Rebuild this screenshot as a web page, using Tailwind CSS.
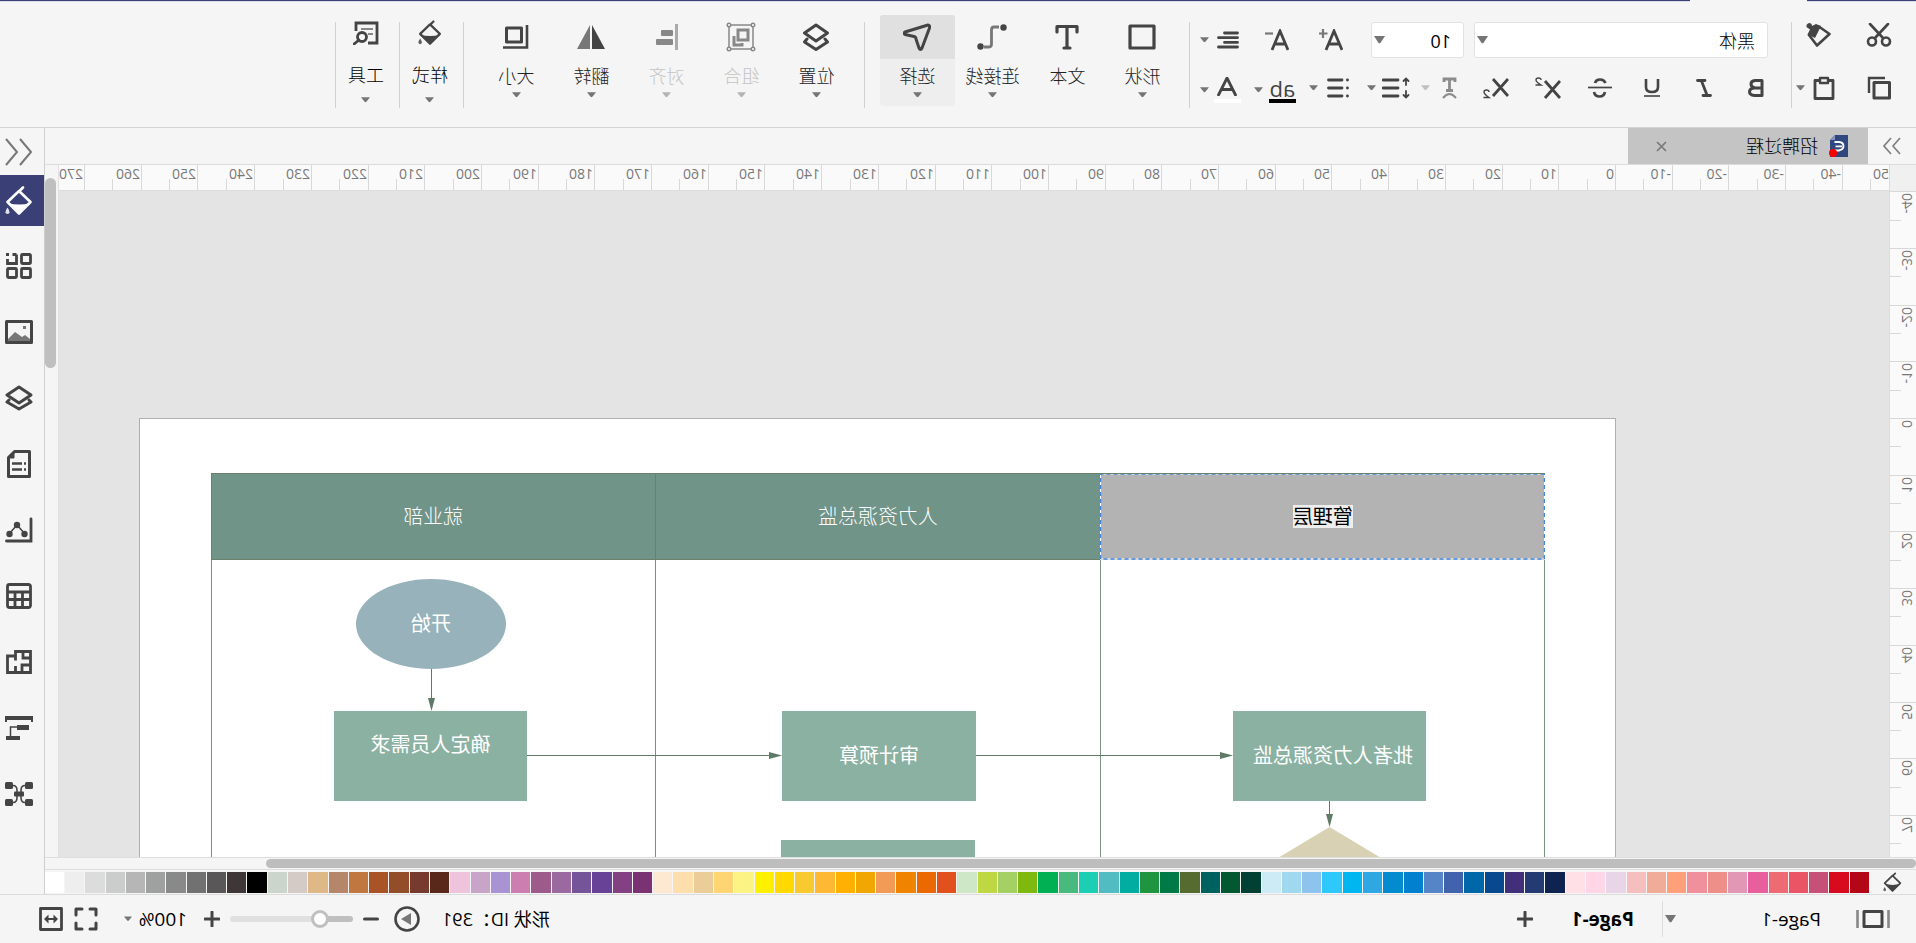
<!DOCTYPE html>
<html lang="zh-CN">
<head>
<meta charset="utf-8">
<title>招聘过程</title>
<script src="https://cdn.jsdelivr.net/npm/@tailwindcss/browser@4"></script>
</head>
<body class="bg-[#f5f5f5] overflow-hidden">
<svg class="hidden" xmlns="http://www.w3.org/2000/svg">
  <symbol id="caret" viewBox="0 0 10 6"><path d="M0 0h10L6 5q-1 1-2 0z" fill="#757575"/></symbol>
  <symbol id="bucket" viewBox="0 0 28 30"><path d="M10 1.500l4 4M14 5l11.500 11L14 27.500 2.500 16z" fill="none" stroke="currentColor" stroke-width="2.600" stroke-linejoin="round" stroke-linecap="round"/><path d="M2.500 17q11 3 23 0L14 28z" fill="currentColor"/><path d="M25.500 21.500q4 6 0 6.500-4-.5 0-6.500z" fill="currentColor" opacity=".85"/></symbol>
  <symbol id="layers" viewBox="0 0 28 26"><path d="M14 2l12 8-12 8L2 10zM4 15l-2 2 12 7 12-7-2-2" fill="none" stroke="currentColor" stroke-width="3" stroke-linejoin="round" stroke-linecap="round"/></symbol>
  <symbol id="plus" viewBox="0 0 16 16"><path d="M8 1v14M1 8h14" stroke="#444" stroke-width="3" stroke-linecap="round"/></symbol>
</svg>

<div class="-scale-x-100 h-screen flex flex-col overflow-hidden bg-[#f5f5f5] text-[#222] font-['Open_Sans','Noto_Sans_CJK_SC',sans-serif] text-[18px] leading-6">

  <!-- title strip -->
  <div class="flex h-[2px] shrink-0"><i class="w-[109px] bg-[#3a4075] border-b border-[#dcdcea]"></i><i class="w-[117px]"></i><i class="flex-1 bg-[#3a4075] border-b border-[#dcdcea]"></i></div>

  <!-- ribbon -->
  <header class="flex h-[126px] shrink-0 border-b border-[#d4d4d4] text-[#444]">
    <section class="w-[124px] pt-[17px] pl-6 flex flex-col" aria-label="剪贴板">
      <div class="flex gap-[34px] h-[36px] items-start pt-1">
        <button aria-label="剪切"><svg class="w-[26px] h-6" viewBox="0 0 26 24" fill="none" stroke="#444" stroke-width="2.6" stroke-linecap="round"><path d="M4 1l13 14M22 1L9 15"/><circle cx="6" cy="18.500" r="4"/><circle cx="20" cy="18.500" r="4"/></svg></button>
        <button aria-label="格式刷"><svg class="w-[26px] h-6" viewBox="0 0 26 24"><path d="M12.500 4L2.500 11 15 22.500 23 12z" fill="none" stroke="#444" stroke-width="2.600" stroke-linejoin="round"/><path d="M11 3l5-2 4 2q0-3 3-3 3 1 2.500 4L22 6.500l2.500 5L17 15z" fill="#444"/></svg></button>
      </div>
      <div class="flex h-[36px] mt-[15px] items-center">
        <button aria-label="复制"><svg class="w-[26px] h-6" viewBox="0 0 26 24" fill="none" stroke="#444" stroke-width="3"><path d="M7 2h16v15" stroke-width="2.400"/><path d="M2.500 6.500h15.500v15.500H2.500z" stroke-linejoin="round"/></svg></button>
        <button aria-label="粘贴" class="ml-[29px] flex items-center gap-[6px]"><svg class="w-[26px] h-6" viewBox="0 0 26 24" fill="none" stroke="#444" stroke-width="2.800" stroke-linejoin="round"><path d="M8 4.500H4v18h18v-18h-4"/><path d="M9 2h8v5H9z" stroke-width="2.400"/></svg><svg class="w-[9px] h-[6px]"><use href="#caret"/></svg></button>
      </div>
    </section>
    <i class="w-px h-[86px] mt-5 bg-[#d0d0d0]"></i>
    <section class="w-[601px] pt-5" aria-label="字体">
      <div class="flex h-[36px] items-center pl-[23px]">
        <label class="relative w-[294px]"><select aria-label="字体" class="appearance-none w-full h-[36px] pt-px pl-3 bg-white border border-[#e2e2e2] rounded-[3px] text-black font-light"><option>黑体</option></select><svg class="absolute right-[3px] top-[14px] w-[11px] h-2" viewBox="0 0 10 6" preserveAspectRatio="none"><use href="#caret"/></svg></label>
        <label class="relative w-[93px] ml-[10px]"><select aria-label="字号" class="appearance-none w-full h-[36px] pt-px pl-3 bg-white border border-[#e2e2e2] rounded-[3px] text-black"><option>10</option></select><svg class="absolute right-[3px] top-[14px] w-[11px] h-2" viewBox="0 0 10 6" preserveAspectRatio="none"><use href="#caret"/></svg></label>
        <button aria-label="增大字号" class="ml-[28px]"><svg class="w-6 h-[22px]" viewBox="0 0 24 22" fill="none" stroke="#444" stroke-width="2.800"><path d="M1 21L9 2l8 19M4 15h10"/><path d="M20 0v9M15.500 4.500h9" stroke="#777" stroke-width="2.200"/></svg></button>
        <button aria-label="减小字号" class="ml-[30px]"><svg class="w-6 h-[22px]" viewBox="0 0 24 22" fill="none" stroke="#444" stroke-width="2.800"><path d="M1 21L9 2l8 19M4 15h10"/><path d="M16 4.500h8" stroke="#777" stroke-width="2.200"/></svg></button>
        <button aria-label="对齐方式" class="ml-[26px] flex items-center gap-2"><svg class="w-[22px] h-[18px]" viewBox="0 0 22 18" fill="none" stroke="#444" stroke-width="2.800" stroke-linecap="round"><path d="M1.500 2h13M1.500 6.700h19M1.500 11.400h13M1.500 16h19"/></svg><svg class="w-[9px] h-[6px]"><use href="#caret"/></svg></button>
      </div>
      <div class="flex h-[36px] mt-3 items-center pl-[9px]">
        <button aria-label="加粗" class="w-[52px] flex justify-center"><svg class="w-4 h-[18px]" viewBox="0 0 16 18" fill="none" stroke="#444" stroke-width="3"><path d="M2 1.500h7q4 .5 4 3.500t-4 4H2zM2 9h7.500q5 .5 5 3.700T9.500 16.500H2z" stroke-linejoin="round"/></svg></button>
        <button aria-label="斜体" class="w-[52px] flex justify-center"><svg class="w-4 h-[18px]" viewBox="0 0 16 18" fill="none" stroke="#444" stroke-width="2.800" stroke-linecap="round"><path d="M7 1.500h7.500M1.500 16.500H9M10.500 2L5 16"/></svg></button>
        <button aria-label="下划线" class="w-[52px] flex justify-center"><svg class="w-4 h-[18px]" viewBox="0 0 16 18" fill="none" stroke="#444" stroke-width="2.600"><path d="M2 0v8q0 5 6 5t6-5V0"/><path d="M0 17h16" stroke-width="1.600"/></svg></button>
        <button aria-label="删除线" class="w-[52px] flex justify-center"><svg class="w-6 h-5" viewBox="0 0 24 20" fill="none" stroke="#444" stroke-width="2.700"><path d="M17 5q-1-3.500-5-3.500T6.500 5M7 14q1 4.500 5.500 4.500T18 14"/><path d="M0 9.500h24" stroke-width="1.700"/></svg></button>
        <button aria-label="上标" class="w-[52px] flex justify-center"><svg class="w-[26px] h-[22px]" viewBox="0 0 26 22" fill="none" stroke="#444" stroke-width="2.800"><path d="M1 4l15 17M16 4L1 21"/><path d="M20 3q0-2 2.500-2T25 3t-5 5h5.500" stroke-width="1.400"/></svg></button>
        <button aria-label="下标" class="w-[52px] flex justify-center"><svg class="w-[26px] h-[22px]" viewBox="0 0 26 22" fill="none" stroke="#444" stroke-width="2.800"><path d="M1 2l15 17M16 2L1 19"/><path d="M20 15q0-2 2.500-2T25 15t-5 5.500h5.500" stroke-width="1.400"/></svg></button>
        <button aria-label="文字方向" disabled class="w-[39px] ml-[10px] flex items-center justify-between"><svg class="w-5 h-[22px]" viewBox="0 0 20 22" fill="none" stroke="#8c8c8c" stroke-width="2.800"><path d="M5 5V2h11v3M10.500 2v11M7 13.500h7"/><path d="M4 21q6.500-8 13 0" stroke-width="2"/></svg><svg class="w-[9px] h-[6px] opacity-40"><use href="#caret"/></svg></button>
        <button aria-label="行距" class="w-[43px] ml-[11px] flex items-center justify-between"><svg class="w-7 h-[22px]" viewBox="0 0 28 22" fill="none" stroke="#444" stroke-width="2.800" stroke-linecap="round"><path d="M12 3h15M12 11h15M12 19h15"/><path d="M4 2v6M1.500 4L4 1.500 6.500 4M4 14v6M1.500 18L4 20.500 6.500 18" stroke-width="1.800"/></svg><svg class="w-[9px] h-[6px]"><use href="#caret"/></svg></button>
        <button aria-label="项目符号" class="w-[40px] ml-[18px] flex items-center justify-between"><svg class="w-[22px] h-[20px]" viewBox="0 0 22 20" fill="none" stroke="#444" stroke-width="2.800" stroke-linecap="round"><path d="M7 2h13.500M7 10h13.500M7 18h13.500"/><path d="M1.500 2h.1M1.500 10h.1M1.500 18h.1"/></svg><svg class="w-[9px] h-[6px]"><use href="#caret"/></svg></button>
        <button class="w-[42px] ml-[13px] mt-1 flex items-center justify-between"><span class="w-[27px] text-center text-[22px] leading-[22px] border-b-4 border-black font-medium">ab</span><svg class="w-[9px] h-[6px]"><use href="#caret"/></svg></button>
        <button aria-label="字体颜色" class="w-[41px] ml-[13px] mt-1 flex items-center justify-between"><span class="w-[27px] pb-[3px] flex justify-center border-b-4 border-white"><svg class="w-5 h-[19px]" viewBox="0 0 20 19" fill="none" stroke="#444" stroke-width="2.800"><path d="M1 19L10 1l9 18M4 12.500h12"/></svg></span><svg class="w-[9px] h-[6px]"><use href="#caret"/></svg></button>
      </div>
    </section>
    <i class="w-px h-[86px] mt-5 bg-[#d0d0d0]"></i>
    <section class="flex pt-[13px] pl-[9px] pr-[15px] text-[#222] font-light" aria-label="绘图">
      <button class="w-[75px] h-[91px] flex flex-col items-center"><span class="h-11 flex items-center"><svg class="w-7 h-[26px]" viewBox="0 0 28 26"><path d="M2 2h24v22H2z" fill="none" stroke="#444" stroke-width="3.200" stroke-linejoin="round"/></svg></span><span class="mt-[5px]">形状</span><svg class="w-[9px] h-[6px] mt-[4px]"><use href="#caret"/></svg></button>
      <button class="w-[75px] h-[91px] flex flex-col items-center"><span class="h-11 flex items-center"><svg class="w-6 h-[26px]" viewBox="0 0 24 26" fill="none" stroke="#444" stroke-width="3.200" stroke-linecap="round" stroke-linejoin="round"><path d="M2 8V2.500h20V8M12 3v20M9 24h6"/></svg></span><span class="mt-[5px]">文本</span></button>
      <button class="w-[75px] h-[91px] flex flex-col items-center"><span class="h-11 flex items-center"><svg class="w-[30px] h-[26px]" viewBox="0 0 30 26"><path d="M8 3h5q2.500 0 2.500 3v14q0 3 2.500 3h5" fill="none" stroke="#777" stroke-width="2.800"/><circle cx="3.500" cy="3.500" r="3.200" fill="#444"/><circle cx="26.500" cy="22.500" r="3.200" fill="#444"/></svg></span><span class="mt-[5px]">连接线</span><svg class="w-[9px] h-[6px] mt-[4px]"><use href="#caret"/></svg></button>
      <button class="w-[75px] h-[91px] flex flex-col items-center rounded-[3px] bg-[#eee] overflow-hidden"><span class="h-11 w-full flex items-center justify-center bg-[#e0e0e0]"><svg class="w-7 h-7" viewBox="0 0 28 28"><path d="M3 2q-2 0-1.500 3L9 25q1.500 3 3 0l3-9q0-2 2-2.500l9-2q2-1 0-2.500z" fill="none" stroke="#444" stroke-width="3" stroke-linejoin="round"/></svg></span><span class="mt-[5px]">选择</span><svg class="w-[9px] h-[6px] mt-[4px]"><use href="#caret"/></svg></button>
    </section>
    <i class="w-px h-[86px] mt-5 bg-[#d0d0d0]"></i>
    <section class="flex pt-[13px] pl-[10px] pr-[15px] text-[#222] font-light" aria-label="排列">
      <button class="w-[75px] h-[91px] flex flex-col items-center"><span class="h-11 flex items-center"><svg class="w-7 h-7" viewBox="0 0 28 28" fill="none" stroke="#444" stroke-width="3" stroke-linejoin="round" stroke-linecap="round"><path d="M14 2l11.500 8L14 18 2.500 10zM5 16l-2.500 3L14 26.500 25.500 19 23 16"/></svg></span><span class="mt-[5px]">位置</span><svg class="w-[9px] h-[6px] mt-[4px]"><use href="#caret"/></svg></button>
      <button disabled class="w-[75px] h-[91px] flex flex-col items-center text-[#c4c4c4]"><span class="h-11 flex items-center"><svg class="w-[30px] h-[30px]" viewBox="0 0 30 30" fill="none" stroke="#888"><path d="M3 3h24v24H3z" stroke-width="1.500"/><g fill="#f5f5f5" stroke-width="1.400"><circle cx="3" cy="3" r="1.800"/><circle cx="27" cy="3" r="1.800"/><circle cx="3" cy="27" r="1.800"/><circle cx="27" cy="27" r="1.800"/></g><path d="M8 8h10v10H8zM22 14v9H14v-2" stroke-width="3"/></svg></span><span class="mt-[5px]">组合</span><svg class="w-[9px] h-[6px] mt-[4px] opacity-50"><use href="#caret"/></svg></button>
      <button disabled class="w-[75px] h-[91px] flex flex-col items-center text-[#c4c4c4]"><span class="h-11 flex items-center"><svg class="w-6 h-7" viewBox="0 0 24 28"><path d="M0 1h3v26H0z" fill="#aaa"/><rect x="5" y="7" width="12" height="6" rx="1" fill="#888"/><rect x="5" y="16" width="17" height="6" rx="1" fill="#888"/></svg></span><span class="mt-[5px]">对齐</span><svg class="w-[9px] h-[6px] mt-[4px] opacity-50"><use href="#caret"/></svg></button>
      <button class="w-[75px] h-[91px] flex flex-col items-center"><span class="h-11 flex items-center"><svg class="w-7 h-6" viewBox="0 0 28 24"><path d="M13 0v24H0z" fill="#444"/><path d="M15 0v24h13z" fill="#777"/></svg></span><span class="mt-[5px]">翻转</span><svg class="w-[9px] h-[6px] mt-[4px]"><use href="#caret"/></svg></button>
      <button class="w-[75px] h-[91px] flex flex-col items-center"><span class="h-11 flex items-center"><svg class="w-[26px] h-6" viewBox="0 0 26 24" fill="none" stroke="#444" stroke-width="3"><path d="M7.500 3h15v14h-15z" stroke-linejoin="round"/><path d="M2 0v22.500h24" stroke-width="2.600"/></svg></span><span class="mt-[5px]">大小</span><svg class="w-[9px] h-[6px] mt-[4px]"><use href="#caret"/></svg></button>
    </section>
    <i class="w-px h-[86px] mt-5 bg-[#d0d0d0]"></i>
    <button class="w-[63px] h-[96px] mt-[9px] pl-[3px] flex flex-col items-center text-black font-light"><span class="h-11 flex items-center text-[#444]"><svg class="w-6 h-[26px]"><use href="#bucket"/></svg></span><span class="mt-[8px]">样式</span><svg class="w-[9px] h-[6px] mt-[10px]"><use href="#caret"/></svg></button>
    <i class="w-px h-[86px] mt-5 bg-[#d0d0d0]"></i>
    <button class="w-[63px] h-[96px] mt-[9px] pl-[3px] flex flex-col items-center text-black font-light"><span class="h-11 flex items-center"><svg class="w-[26px] h-6" viewBox="0 0 26 24" fill="none" stroke="#444" stroke-width="2.800"><path d="M11 22H2V2h21v8"/><path d="M6 8h12M6 13h5" stroke="#888" stroke-width="2"/><circle cx="17" cy="16" r="4.500"/><path d="M20 19l5 4" stroke-linecap="round"/></svg></span><span class="mt-[8px]">工具</span><svg class="w-[9px] h-[6px] mt-[10px]"><use href="#caret"/></svg></button>
    <i class="w-px h-[86px] mt-5 bg-[#d0d0d0]"></i>
  </header>

  <div class="flex flex-1 min-h-0">
    <main class="flex flex-col flex-1 min-w-0">
      <!-- document tabs -->
      <nav class="flex h-[37px] shrink-0 border-b border-[#dcdcdc] items-stretch">
        <button aria-label="折叠" class="w-12 flex items-center justify-center"><svg class="w-[18px] h-[18px]" viewBox="0 0 18 18" fill="none" stroke="#808080" stroke-width="1.700"><path d="M1 1l7 8-7 8M10 1l7 8-7 8"/></svg></button>
        <div class="w-[240px] bg-[#c4c4c4] flex items-center pl-[19px] pr-7">
          <svg class="w-5 h-[22px]" viewBox="0 0 20 22"><path d="M1 0h13l5 5v17H1z" fill="#2f4880"/><path d="M14 0v5h5z" fill="#8795bb"/><path d="M14.500 7H10Q5.500 7.500 5.500 11t4.500 4.500h4M7 11.300h6.500" fill="none" stroke="#fff" stroke-width="1.800"/><circle cx="16" cy="18" r="4" fill="red"/></svg>
          <a href="#" class="ml-[11px] font-light text-black">招聘过程</a>
          <button aria-label="关闭" class="ml-auto"><svg class="w-[11px] h-[11px]" viewBox="0 0 11 11"><path d="M1 1l9 9M10 1l-9 9" stroke="#777" stroke-width="1.600"/></svg></button>
        </div>
      </nav>

      <div class="flex flex-1 min-h-0">
        <div class="flex flex-col flex-1 min-w-0">
          <div class="flex h-[26px] shrink-0">
            <i class="w-[27px] bg-[#f0f0f0] border-r border-[#dcdcdc]"></i>
            <div id="hruler" class="relative flex-1 overflow-hidden bg-[#fafafa] border-b border-[#dcdcdc] text-[14px] leading-[18px] text-[#777]"></div>
          </div>
          <div class="flex flex-1 min-h-0">
            <div id="vruler" class="relative w-[27px] overflow-hidden bg-[#fafafa] border-r border-[#dcdcdc] text-[14px] leading-[18px] text-[#777]"></div>
            <!-- drawing canvas -->
            <div class="relative flex-1 overflow-hidden bg-[#e4e4e4]">
              <div class="absolute left-[273px] top-[227px] w-[1477px] h-[1050px] bg-white border border-[#b0b0b0] text-[20px] leading-6 text-white">
                <div class="absolute left-[70px] top-[54px] w-[1334px] h-[900px] grid grid-cols-3 grid-rows-[87px_1fr]">
                  <div class="relative bg-[#b3b3b3] flex items-center justify-center"><svg class="absolute inset-0 w-full h-full" fill="none"><rect x=".5" y="1" width="444" height="85" stroke="#fff"/><rect x=".5" y="1" width="444" height="85" stroke="#3f85dc" stroke-width="1.500" stroke-dasharray="4 3"/><path d="M0 .5h445" stroke="#6b8069"/></svg><span class="relative bg-[#eee] text-black leading-[23px]">管理层</span></div>
                  <div class="bg-[#719488] border-y border-[#6b8069] flex items-center justify-center font-light">人力资源总监</div>
                  <div class="bg-[#719488] border border-[#6b8069] flex items-center justify-center font-light">就业部</div>
                  <div class="border-x border-[#76917e]"></div>
                  <div></div>
                  <div class="border-x border-[#76917e]"></div>
                </div>
                <div class="absolute left-[1109px] top-[160px] w-[150px] h-[90px] rounded-[50%] bg-[#97b2bb] flex items-center justify-center">开始</div>
                <div class="absolute left-[1088px] top-[292px] w-[193px] h-[90px] bg-[#8bb1a2] flex items-start justify-center pt-[22px]">确定人员需求</div>
                <div class="absolute left-[639px] top-[292px] w-[194px] h-[90px] bg-[#8bb1a2] flex items-center justify-center">审计预算</div>
                <div class="absolute left-[189px] top-[292px] w-[193px] h-[90px] bg-[#8bb1a2] flex items-center justify-center pr-[7px] whitespace-nowrap">批者人力资源总监</div>
                <div class="absolute left-[640px] top-[421px] w-[194px] h-[90px] bg-[#8bb1a2]"></div>
                <svg class="absolute left-0 top-0 w-[1477px] h-[600px]" viewBox="0 0 1477 600">
                  <path d="M1183.500 250v32M1088 336.500H845M639 336.500H394M285.500 382v16" stroke="#5f7a66" fill="none"/>
                  <path d="M1180 279h7l-3.500 13zM846 333v7l-13-3.500zM395 333v7l-13-3.500zM282 395h7l-3.500 13z" fill="#5f7a66"/>
                  <path d="M285.500 408l75 45-75 45-75-45z" fill="#d8d1b3"/>
                </svg>
              </div>
            </div>
          </div>
        </div>
        <div class="w-[14px] border-l border-[#e0e0e0] pt-[13px] pl-[2px]"><div class="w-[11px] h-[190px] rounded-full bg-[#bfbfbf]"></div></div>
      </div>

      <div class="h-[13px] shrink-0 border-y border-[#dedede] flex items-center pr-[221px]"><div class="flex-1 h-[9px] rounded-full bg-[#bdbdbd]"></div></div>

      <div class="flex h-6 shrink-0 items-center">
        <button aria-label="填充" class="w-[47px] flex justify-center text-[#444]"><svg class="w-[19px] h-[21px]"><use href="#bucket"/></svg></button>
        <div id="palette" class="flex flex-1 gap-px h-[21px]"></div>
      </div>
    </main>

    <!-- side panel -->
    <aside class="w-[45px] shrink-0 border-l border-[#cfcfcf] flex flex-col items-center text-[#444] pl-[5px]">
      <button aria-label="展开" class="h-[47px] flex items-center"><svg class="w-7 h-7" viewBox="0 0 28 28" fill="none" stroke="#777" stroke-width="2"><path d="M13 1L2 14l11 13M27 1L16 14l11 13"/></svg></button>
      <button aria-label="填充" class="h-[51px] w-11 -ml-[5px] pl-[5px] shrink-0 bg-[#3a4075] text-white flex items-center justify-center"><svg class="w-7 h-[30px]"><use href="#bucket"/></svg></button>
      <button aria-label="符号库" class="h-[66px] mt-[7px] shrink-0"><svg class="w-[26px] h-[26px]" viewBox="0 0 26 26" fill="none" stroke="currentColor" stroke-width="2.800"><rect x="1.500" y="1.500" width="9" height="9" rx="1"/><path d="M15.500 1.500h4M24.500 6v4.500h-9v-9M23 1.500h3"/><rect x="1.500" y="15.500" width="9" height="9" rx="1"/><rect x="15.500" y="15.500" width="9" height="9" rx="1"/></svg></button>
      <button aria-label="图片" class="h-[66px] shrink-0"><svg class="w-7 h-6" viewBox="0 0 28 24"><path d="M1.500 1.500h25v21h-25z" fill="none" stroke="currentColor" stroke-width="3" stroke-linejoin="round"/><path d="M3 19l5-4 3 2 7-5 7 7v2H3z" fill="#777"/><path d="M7 6h3v3H7z" fill="#777"/></svg></button>
      <button aria-label="图层" class="h-[66px] shrink-0"><svg class="w-7 h-[26px]"><use href="#layers"/></svg></button>
      <button aria-label="备注" class="h-[66px] shrink-0"><svg class="w-6 h-7" viewBox="0 0 24 28" fill="none" stroke="currentColor" stroke-width="3" stroke-linejoin="round"><path d="M1.500 1.500h15l6 6v19h-21z"/><path d="M17 1v7h6z" fill="currentColor" stroke-width="1"/><path d="M5 13.500h2M9 13.500h10M5 19.500h2M9 19.500h10" stroke-width="2.600"/></svg></button>
      <button aria-label="图表" class="h-[66px] shrink-0"><svg class="w-7 h-[26px]" viewBox="0 0 28 26" fill="none" stroke="currentColor" stroke-width="2.800" stroke-linecap="round"><path d="M2 2v22h24.500"/><path d="M8 17l8-9 8 9" stroke-width="1.500"/><g fill="currentColor" stroke="none"><circle cx="8.500" cy="17" r="3.200"/><circle cx="16" cy="8" r="3.200"/><circle cx="23.500" cy="17" r="3.200"/></g></svg></button>
      <button aria-label="表格" class="h-[66px] shrink-0"><svg class="w-[26px] h-[26px]" viewBox="0 0 26 26" fill="none" stroke="currentColor" stroke-width="2.800"><rect x="1.500" y="1.500" width="23" height="23" rx="2"/><path d="M1 9h24M1 16.500h24M9.500 9v16M17 9v16"/></svg></button>
      <button aria-label="平面图" class="h-[66px] shrink-0"><svg class="w-[26px] h-6" viewBox="0 0 26 24" fill="none" stroke="currentColor" stroke-width="2.800"><path d="M1.500 1.500H16.500V6H24.500V22.500H1.500zM16.500 6v4.500M9 1v7H2M1 15h9v8M16.500 16v6"/></svg></button>
      <button aria-label="甘特图" class="h-[66px] shrink-0"><svg class="w-7 h-6" viewBox="0 0 28 24"><path d="M0 0h28v6h-2V4H2v2H0zM4 9h12v5H4zM13 20h14v4H13z" fill="currentColor"/><path d="M16 11h6.500v10" fill="none" stroke="currentColor" stroke-width="1.500"/></svg></button>
      <button aria-label="思维导图" class="h-[66px] shrink-0"><svg class="w-7 h-6" viewBox="0 0 28 24"><g fill="currentColor"><rect width="8" height="7" rx="1.500"/><rect x="20" width="8" height="7" rx="1.500"/><rect y="17" width="8" height="7" rx="1.500"/><rect x="20" y="17" width="8" height="7" rx="1.500"/><rect x="9" y="9.500" width="10" height="5" rx="1"/></g><path d="M8 3.500q4 0 4 5v7q0 5-4 5M20 3.500q-4 0-4 5v7q0 5 4 5" fill="none" stroke="currentColor" stroke-width="1.600"/></svg></button>
    </aside>
  </div>

  <!-- status bar -->
  <footer class="flex h-[49px] shrink-0 border-t border-[#dcdcdc] items-center text-black">
    <button aria-label="页面视图" class="ml-[26px]"><svg class="w-[34px] h-[18px]" viewBox="0 0 34 18"><path d="M1.500 0v18M32.500 0v18" stroke="#888" stroke-width="2.600"/><path d="M8 1.500h18v15H8z" fill="none" stroke="#444" stroke-width="3" stroke-linejoin="round"/></svg></button>
    <label class="relative ml-[35px] w-[158px]"><select aria-label="页面" class="appearance-none w-full bg-transparent text-[19px]"><option>Page-1</option></select><svg class="absolute right-[2px] top-2 w-[11px] h-2" viewBox="0 0 10 6" preserveAspectRatio="none"><use href="#caret"/></svg></label>
    <i class="w-px h-9 bg-[#dcdcdc]"></i>
    <a href="#" class="ml-[28px] w-[61px] text-[19px] font-bold whitespace-nowrap">Page-1</a>
    <button aria-label="新建页面" class="ml-[40px]"><svg class="w-4 h-4"><use href="#plus"/></svg></button>
    <span class="ml-auto whitespace-nowrap">形状 ID：391</span>
    <button aria-label="播放" class="ml-[22px]"><svg class="w-[26px] h-[26px]" viewBox="0 0 26 26"><circle cx="13" cy="13" r="11.500" fill="none" stroke="#444" stroke-width="2.600"/><path d="M9 7l10 6-10 6z" fill="#777"/></svg></button>
    <button aria-label="缩小" class="ml-[15px]"><svg class="w-4 h-4" viewBox="0 0 16 16"><path d="M1.500 8h13" stroke="#444" stroke-width="3" stroke-linecap="round"/></svg></button>
    <label class="relative ml-[10px] w-[123px] h-5 flex items-center">
      <span class="h-[6px] w-[30px] rounded-l-full bg-[#bfbfbf]"></span><span class="h-[6px] flex-1 rounded-r-full bg-[#e0e0e0]"></span>
      <span class="absolute left-6 top-px size-[18px] rounded-full bg-white border-[3px] border-[#bfbfbf]"></span>
      <input type="range" aria-label="缩放" value="27" class="absolute inset-0 w-full opacity-0">
    </label>
    <button aria-label="放大" class="ml-[10px]"><svg class="w-4 h-4"><use href="#plus"/></svg></button>
    <button class="ml-[17px] flex items-center"><span class="w-[55px] text-[19px] text-left">100%</span><svg class="w-[8px] h-[6px]"><use href="#caret"/></svg></button>
    <button aria-label="全屏" class="ml-[26px]"><svg class="w-6 h-6" viewBox="0 0 24 24" fill="none" stroke="#444" stroke-width="3"><path d="M2 8V2h6M16 2h6v6M22 16v6h-6M8 22H2v-6" stroke-linejoin="round" stroke-linecap="round"/></svg></button>
    <button aria-label="适应宽度" class="ml-[11px] mr-[39px]"><svg class="w-6 h-6" viewBox="0 0 24 24" fill="none" stroke="#444"><path d="M1.500 1.500h21v21h-21z" stroke-width="2.800" stroke-linejoin="round"/><path d="M6 12h12" stroke-width="2"/><path d="M9.500 7.500L5 12l4.500 4.500zM14.500 7.500L19 12l-4.500 4.500z" fill="#444" stroke="none"/></svg></button>
  </footer>
</div>

<script>
  const STEP = 56.7;
  const el = (cls, text) => { const e = document.createElement('span'); e.className = cls; if (text !== undefined) e.textContent = text; return e; };
  function ruler(id, origin, from, to, side, full, half, label) {
    const box = document.getElementById(id);
    for (let n = from; n <= to; n++) {
      const at = Math.round(origin + n * STEP);
      const mid = Math.round(origin + (n + 0.5) * STEP);
      // a label whose tick lies before the ruler's start keeps only its digits
      const inside = at >= 0;
      const text = inside ? n * 10 : Math.abs(n * 10);
      const marks = [[full, at], [half, mid]];
      if (inside || side === 'left') marks.push([label, inside ? at + 2 : 0, text]);
      for (const [cls, pos, t] of marks) {
        const e = el(cls, t); e.style[side] = pos + 'px'; box.append(e);
      }
    }
  }
  ruler('hruler', 273, -5, 27, 'left',
    'absolute top-0 h-full w-px bg-[#d8d8d8]', 'absolute bottom-0 h-[11px] w-px bg-[#d8d8d8]', 'absolute top-0');
  ruler('vruler', 227, -4, 7, 'top',
    'absolute left-0 w-full h-px bg-[#d8d8d8]', 'absolute right-0 w-[11px] h-px bg-[#d8d8d8]', 'absolute left-0 [writing-mode:vertical-rl] rotate-180');

  const colors = 'b30617 d80a1e c75079 e95564 ee6b73 e85f9d e298b5 ee8f8a f0909c ffa07a f0ac98 f6bfbf e9d5e8 ffd6e6 ffe0e6 0f2350 243a73 412f79 08488f 0068a8 4163ae 5585c6 0080cf 028ccf 2ea7e3 00b6f0 2fc8fa 8dc3ec a0d8ef cdebf7 004133 025831 00625f 556b2f 007b48 1f9540 00ada0 51bdc3 1bceb4 48ba7e 00b052 7eb90f a4d064 bfd742 cde7c7 e1501d ec6800 f08300 f29b56 f2a602 ffb000 ffb833 f9ca30 ffd900 fff000 fcf385 ffd574 eacd99 ffdeae fde8d2 7b3273 834083 684296 755499 99699f 9c5b8b cc7eb1 aa93d2 c8a5c8 eec4dc 59281b 763a2f 934d29 a85426 c07840 b6866b deb887 d4cac6 cbd5cc 000000 3f3737 595757 727171 898989 9fa0a0 b5b6b5 cacdcc dcdcdc eeeeee ffffff'.split(' ');
  const palette = document.getElementById('palette');
  for (const c of colors) {
    const b = document.createElement('button');
    b.className = 'flex-1'; b.style.background = '#' + c; b.setAttribute('aria-label', '#' + c);
    palette.append(b);
  }
</script>
</body>
</html>
